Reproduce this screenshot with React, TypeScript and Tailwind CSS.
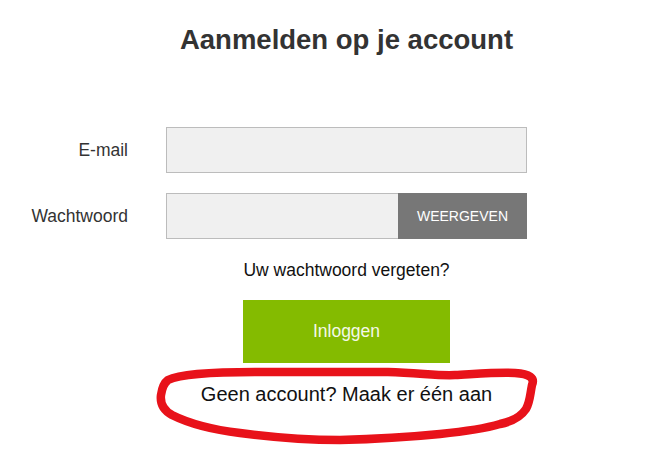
import React from "react";

export default function App() {
  const font = { fontFamily: '"Liberation Sans", Arial, sans-serif' };
  return (
    <div className="relative w-[666px] h-[475px] bg-white overflow-hidden" style={font}>
      <div className="flex flex-col">
        <div className="pl-[27px] pt-[24px]">
          <h1 className="text-center text-[27.5px] leading-[32px] font-bold text-[#333333]">
            Aanmelden op je account
          </h1>
        </div>
        <div className="mt-[71px] flex flex-col gap-[20px]">
          <div className="flex items-center">
            <label className="w-[128px] text-right text-[17.5px] leading-[46px] text-[#333333]">E-mail</label>
            <div className="ml-[38px] w-[361px] h-[46px] bg-[#f0f0f0] border border-[#bcbcbc]" />
          </div>
          <div className="flex items-center">
            <label className="w-[128px] text-right text-[17.5px] leading-[46px] text-[#333333]">Wachtwoord</label>
            <div className="ml-[38px] w-[361px] h-[46px] flex">
              <div className="flex-1 bg-[#f0f0f0] border border-[#bcbcbc] border-r-0" />
              <button className="w-[129px] h-[46px] bg-[#777777] text-white text-[14px] uppercase">
                Weergeven
              </button>
            </div>
          </div>
        </div>
        <div className="pl-[27px] flex flex-col items-center">
          <div className="mt-[19px] text-[17.5px] leading-[24px] text-[#111111]">Uw wachtwoord vergeten?</div>
          <button className="mt-[18px] w-[207px] h-[63px] bg-[#84bb00] text-[#f4f8e8] text-[17.5px]">
            Inloggen
          </button>
          <div className="mt-[19px] text-[20px] leading-[24px] text-[#111111]">Geen account? Maak er één aan</div>
        </div>
      </div>
      <svg className="absolute top-0 left-0 pointer-events-none" width="666" height="475" viewBox="0 0 666 475">
        <path
          d="M168,380 C180,374 220,372 255,372 L388,372 C420,373 440,376 455,375 C475,374 500,372 515,373 C530,374 535,378 532,385 C530,395 530,402 526,409 C520,418 510,422 500,424 C480,430 460,432 440,434 C410,437 380,439 340,440 C300,440 270,437 240,433 C215,430 190,424 172,415 C163,410 160,403 161,395 C162,388 164,383 168,380 Z"
          fill="none"
          stroke="#e8121a"
          strokeWidth="8.5"
          strokeLinejoin="round"
          strokeLinecap="round"
        />
      </svg>
    </div>
  );
}
